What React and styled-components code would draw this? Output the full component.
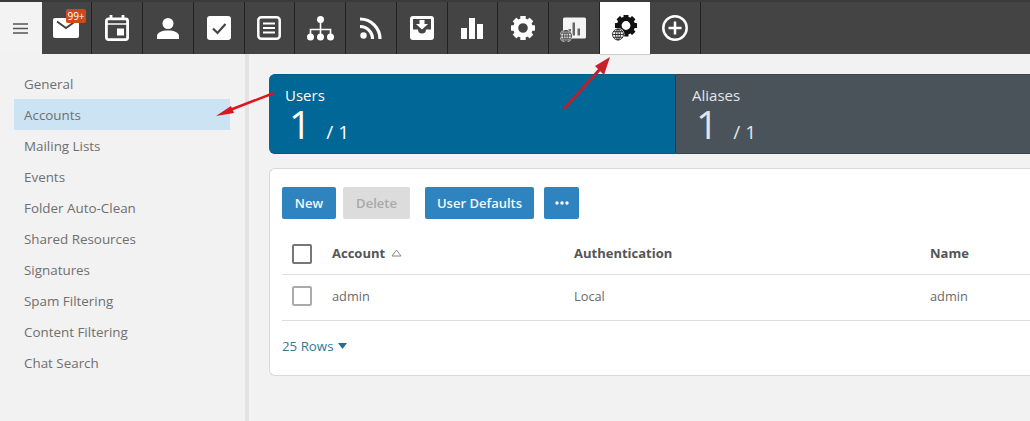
import { createGlobalStyle } from "styled-components";
import styled from "styled-components";

const Global = createGlobalStyle`
  html, body { margin: 0; padding: 0; background: #f2f2f2; overflow: hidden; }
  body { font-family: "Open Sans", "Liberation Sans", sans-serif; color: #666; }
`;

const Page = styled.div`
  position: relative;
  width: 1030px;
  height: 421px;
  overflow: hidden;
  display: flex;
  flex-direction: column;
`;
const TopBar = styled.div`
  display: flex;
  height: 54px;
  flex: none;
  box-sizing: border-box;
  border-top: 2px solid #3a3a3a;
  background: #444;
`;
const Burger = styled.button`
  width: 41.5px;
  flex: none;
  border: 0;
  padding: 0;
  background: #f3f3f3;
  display: flex;
  align-items: center;
  justify-content: center;
`;
const Tab = styled.div`
  position: relative;
  width: 50.75px;
  flex: none;
  box-sizing: border-box;
  display: flex;
  align-items: center;
  justify-content: center;
  background: ${(p) => (p.$active ? "#fff" : "#444")};
  border-right: 1px solid ${(p) => (p.$active ? "#444" : "#222")};
  color: ${(p) => (p.$active ? "#111" : "#fff")};
  ${(p) => p.$active && "box-shadow: 0 1px 0 #ccc;"}
`;
const Badge = styled.span`
  position: absolute;
  top: 7px;
  left: 24.5px;
  width: 20px;
  text-align: center;
  background: #cc4b1d;
  color: #fff;
  font-size: 10px;
  line-height: 14px;
  border-radius: 2px;
`;
const Body = styled.div`
  flex: 1;
  display: flex;
  min-height: 0;
`;
const Side = styled.nav`
  width: 249px;
  flex: none;
  box-sizing: border-box;
  padding: 14px 15px 0 14px;
  border-right: 4px solid #e3e3e3;
`;
const SideItem = styled.div`
  height: 31px;
  line-height: 32px;
  padding-left: 10px;
  font-size: 13.4px;
  color: #6f6f6f;
  background: ${(p) => (p.$active ? "#cbe3f2" : "transparent")};
`;
const Main = styled.main`
  flex: 1;
  min-width: 0;
  padding: 20px 0 0 20px;
`;
const Stats = styled.div`
  display: flex;
  height: 80px;
`;
const Stat = styled.div`
  box-sizing: border-box;
  color: #fff;
  padding: 11px 0 0 16px;
  background: ${(p) => (p.$dark ? "#4a5359" : "#006796")};
  width: ${(p) => (p.$dark ? "360px" : "407px")};
  flex: none;
  border-radius: ${(p) => (p.$dark ? "0" : "6px 0 0 6px")};
  border-right: ${(p) => (p.$dark ? "0" : "1px solid #1c3b4c")};
  border-top: 1px solid ${(p) => (p.$dark ? "#38434a" : "#005a85")};
  border-bottom: 1px solid ${(p) => (p.$dark ? "#38434a" : "#005a85")};
`;
const StatLabel = styled.div`
  font-size: 15px;
  line-height: 19px;
  color: ${(p) => (p.$dark ? "#e3e6e8" : "#fff")};
`;
const StatValue = styled.div`
  display: flex;
  align-items: baseline;
  margin-left: 4px;
  line-height: 38px;
  font-size: 39px;
  font-weight: 400;
  color: ${(p) => (p.$dark ? "#e3e6e8" : "#fff")};
`;
const StatMax = styled.span`
  font-size: 19px;
  margin-left: 15px;
  font-weight: 400;
`;
const Card = styled.section`
  margin-top: 14px;
  height: 208px;
  box-sizing: border-box;
  background: #fff;
  border: 1px solid #d9d9d9;
  border-right: 0;
  border-radius: 6px 0 0 6px;
  padding: 18px 0 0 12px;
`;
const Toolbar = styled.div`
  display: flex;
  height: 32px;
`;
const Btn = styled.button`
  height: 32px;
  padding: 0;
  width: ${(p) => p.$w}px;
  margin-left: ${(p) => p.$ml || 0}px;
  border: 0;
  border-radius: 2px;
  font-family: inherit;
  font-size: 13px;
  font-weight: 600;
  background: ${(p) => (p.$off ? "#dcdcdc" : "#2f84bf")};
  color: ${(p) => (p.$off ? "#a9a9a9" : "#f3f8fb")};
  display: flex;
  align-items: center;
  justify-content: center;
`;
const Row = styled.div`
  display: grid;
  grid-template-columns: 50px 242px 356px 1fr;
  align-items: center;
  height: ${(p) => p.$h}px;
  padding-top: ${(p) => p.$pt || 0}px;
  padding-bottom: ${(p) => p.$pb || 0}px;
  border-bottom: 1px solid #dfdfdf;
  box-sizing: border-box;
  font-size: ${(p) => (p.$head ? "13px" : "12.8px")};
  font-weight: ${(p) => (p.$head ? 700 : 400)};
  color: ${(p) => (p.$head ? "#555" : "#6a6a6a")};
`;
const Check = styled.span`
  width: 20px;
  height: 20px;
  box-sizing: border-box;
  margin-left: 10px;
  border: 2px solid ${(p) => (p.$head ? "#777" : "#aaa")};
  border-radius: 2px;
  display: block;
`;
const HeadCell = styled.span`
  margin-bottom: 2px;
`;
const SortCell = styled(HeadCell)`
  display: flex;
  align-items: center;
  gap: 6px;
`;
const RowsLink = styled.div`
  margin-top: 15px;
  display: flex;
  align-items: center;
  gap: 4px;
  font-size: 13.3px;
  line-height: 20px;
  color: #337a96;
`;
const Arrow = styled.svg`
  position: absolute;
  left: 0;
  top: 0;
  pointer-events: none;
`;

const MailIcon = () => (
  <svg width="26" height="20" viewBox="0 0 26 20" fill="currentColor">
    <rect width="26" height="20" rx="2" />
    <path d="M4 3.500l9 6.500 9-6.500" fill="none" stroke="#444" strokeWidth="2" />
  </svg>
);
const CalendarIcon = () => (
  <svg width="24" height="26" viewBox="0 0 24 26" fill="none" stroke="currentColor" strokeWidth="2.800">
    <rect x="1.400" y="3.900" width="21.200" height="20.700" rx="2" />
    <path d="M6 0v4M18 0v4" />
    <path d="M1 9h22" strokeWidth="1.500" />
    <rect x="12" y="13.500" width="7" height="7" fill="currentColor" stroke="none" />
  </svg>
);
const UserIcon = () => (
  <svg width="22" height="21" viewBox="0 0 22 21" fill="currentColor">
    <circle cx="11" cy="5.500" r="5.500" />
    <path d="M0 21v-3c0-3.500 5-5.500 11-5.500S22 14.500 22 18v3z" />
  </svg>
);
const CheckIcon = () => (
  <svg width="24" height="24" viewBox="0 0 24 24" fill="currentColor">
    <rect width="24" height="24" rx="3" />
    <path d="M6 12.500l4.500 4.500L18.500 8" fill="none" stroke="#444" strokeWidth="2.200" />
  </svg>
);
const NoteIcon = () => (
  <svg width="24" height="24" viewBox="0 0 24 24" fill="none" stroke="currentColor" strokeWidth="2.500">
    <rect x="1.300" y="1.300" width="21.400" height="21.400" rx="3" />
    <path d="M6 7.500h12M6 12h12M6 16.500h12" strokeWidth="2.200" />
  </svg>
);
const TreeIcon = () => (
  <svg width="27" height="25" viewBox="0 0 27 25" fill="currentColor">
    <circle cx="13.500" cy="3.500" r="3.500" />
    <circle cx="3.500" cy="21" r="3.500" />
    <circle cx="13.500" cy="21" r="3.500" />
    <circle cx="23.500" cy="21" r="3.500" />
    <path d="M13.500 6v13M3.500 19v-5.500h20V19" fill="none" stroke="currentColor" strokeWidth="1.600" />
  </svg>
);
const RssIcon = () => (
  <svg width="22" height="22" viewBox="0 0 22 22" fill="none" stroke="currentColor" strokeWidth="3.200">
    <circle cx="3.500" cy="18.500" r="3.200" fill="currentColor" stroke="none" />
    <path d="M0 9.500a12.500 12.500 0 0 1 12.500 12.500M0 2a20 20 0 0 1 20 20" />
  </svg>
);
const InboxIcon = () => (
  <svg width="24" height="24" viewBox="0 0 24 24" fill="currentColor">
    <path fillRule="evenodd" d="M3 0h18a3 3 0 0 1 3 3v18a3 3 0 0 1-3 3H3a3 3 0 0 1-3-3V3a3 3 0 0 1 3-3zM3 3v10.500h5a4 4 0 0 0 8 0h5V3z" />
    <path d="M9.500 4h5v4H18l-6 5.500L6 8h3.500z" />
  </svg>
);
const BarsIcon = () => (
  <svg width="22" height="21" viewBox="0 0 22 21" fill="currentColor">
    <rect y="10" width="6" height="11" />
    <rect x="8" width="6" height="21" />
    <rect x="16" y="6" width="6" height="15" />
  </svg>
);
// ring plus eight chunky teeth, drawn around 0,0
const Gear = ({ color }) => (
  <g fill={color}>
    <circle r="7.300" fill="none" stroke={color} strokeWidth="5" />
    {[0, 45, 90, 135, 180, 225, 270, 315].map((a) => (
      <rect key={a} x="-2.700" y="-12" width="5.400" height="4" rx="0.600" transform={`rotate(${a})`} />
    ))}
  </g>
);
const GearIcon = () => (
  <svg width="24" height="24" viewBox="-12 -12 24 24">
    <Gear color="currentColor" />
  </svg>
);
const Globe = ({ x, y, bg, color }) => (
  <g transform={`translate(${x} ${y})`} fill="none" stroke={color} strokeWidth="0.900">
    <circle cx="6" cy="6" r="6.500" fill={bg} stroke="none" />
    <circle cx="6" cy="6" r="5.500" />
    <ellipse cx="6" cy="6" rx="2.400" ry="5.500" />
    <path d="M.5 6h11M1.300 3.200h9.400M1.300 8.800h9.400M6 .5v11" />
  </g>
);
const ReportGlobeIcon = () => (
  <svg width="27" height="27" viewBox="0 0 27 27">
    <rect x="3" y="2.500" width="23" height="21" rx="1.500" fill="#f4f4f4" />
    <path fill="#666" d="M8.500 14h2.500v6.500H8.500zM12.500 7.500H15v13h-2.500zM17.500 13.500H20v7h-2.500z" />
    <Globe x="0" y="15" bg="#e6e6e6" color="#444" />
  </svg>
);
const GearGlobeIcon = () => (
  <svg width="26" height="26" viewBox="0 0 26 26">
    <g transform="translate(14 10.500) scale(0.92)">
      <Gear color="#111" />
    </g>
    <Globe x="0" y="13.500" bg="#fff" color="#222" />
  </svg>
);
const PlusIcon = () => (
  <svg width="26" height="26" viewBox="0 0 26 26" fill="none" stroke="currentColor" strokeWidth="2.500">
    <circle cx="13" cy="13" r="11.700" />
    <path d="M13 6.500v13M6.500 13h13" />
  </svg>
);

const tabs = [
  { icon: <MailIcon />, badge: "99+" },
  { icon: <CalendarIcon /> },
  { icon: <UserIcon /> },
  { icon: <CheckIcon /> },
  { icon: <NoteIcon /> },
  { icon: <TreeIcon /> },
  { icon: <RssIcon /> },
  { icon: <InboxIcon /> },
  { icon: <BarsIcon /> },
  { icon: <GearIcon /> },
  { icon: <ReportGlobeIcon /> },
  { icon: <GearGlobeIcon />, active: true },
  { icon: <PlusIcon /> },
];
const sideItems = [
  "General",
  "Accounts",
  "Mailing Lists",
  "Events",
  "Folder Auto-Clean",
  "Shared Resources",
  "Signatures",
  "Spam Filtering",
  "Content Filtering",
  "Chat Search",
];

export default function App() {
  return (
    <Page>
      <Global />
      <TopBar>
        <Burger aria-label="Menu">
          <svg width="15" height="11" viewBox="0 0 15 11" fill="none" stroke="#555" strokeWidth="1.500">
            <path d="M0 1h15M0 5.500h15M0 10h15" />
          </svg>
        </Burger>
        {tabs.map((t, i) => (
          <Tab key={i} $active={t.active}>
            {t.icon}
            {t.badge && <Badge>{t.badge}</Badge>}
          </Tab>
        ))}
      </TopBar>
      <Body>
        <Side>
          {sideItems.map((s) => (
            <SideItem key={s} $active={s === "Accounts"}>
              {s}
            </SideItem>
          ))}
        </Side>
        <Main>
          <Stats>
            <Stat>
              <StatLabel>Users</StatLabel>
              <StatValue>
                1<StatMax>/ 1</StatMax>
              </StatValue>
            </Stat>
            <Stat $dark>
              <StatLabel $dark>Aliases</StatLabel>
              <StatValue $dark>
                1<StatMax>/ 1</StatMax>
              </StatValue>
            </Stat>
          </Stats>
          <Card>
            <Toolbar>
              <Btn $w={54}>New</Btn>
              <Btn $w={67} $ml={7} $off>
                Delete
              </Btn>
              <Btn $w={109} $ml={15}>
                User Defaults
              </Btn>
              <Btn $w={35} $ml={10}>
                <svg width="14" height="4" viewBox="0 0 14 4" fill="#fff">
                  <circle cx="2" cy="2" r="1.700" />
                  <circle cx="7" cy="2" r="1.700" />
                  <circle cx="12" cy="2" r="1.700" />
                </svg>
              </Btn>
            </Toolbar>
            <Row $head $h={56} $pt={15}>
              <Check $head />
              <SortCell>
                Account
                <svg width="11" height="8" viewBox="0 0 11 8" fill="none" stroke="#888" strokeWidth="1">
                  <path d="M5.500 1L10 7H1z" />
                </svg>
              </SortCell>
              <HeadCell>Authentication</HeadCell>
              <HeadCell>Name</HeadCell>
            </Row>
            <Row $h={46} $pb={3}>
              <Check />
              <span>admin</span>
              <span>Local</span>
              <span>admin</span>
            </Row>
            <RowsLink>
              25 Rows
              <svg width="9" height="6" viewBox="0 0 9 6" fill="#1f6f8f">
                <path d="M0 0h9L4.500 6z" />
              </svg>
            </RowsLink>
          </Card>
        </Main>
      </Body>
      <Arrow width="1030" height="421" viewBox="0 0 1030 421">
        <path d="M274 93L230 110" stroke="#dc1620" strokeWidth="2.500" fill="none" />
        <path d="M216 116L231 106L234 113z" fill="#dc1620" />
        <path d="M564 109L601 68" stroke="#b8222c" strokeWidth="3" fill="none" />
        <path d="M610 57L604 75L595 66z" fill="#c9212b" />
      </Arrow>
    </Page>
  );
}
